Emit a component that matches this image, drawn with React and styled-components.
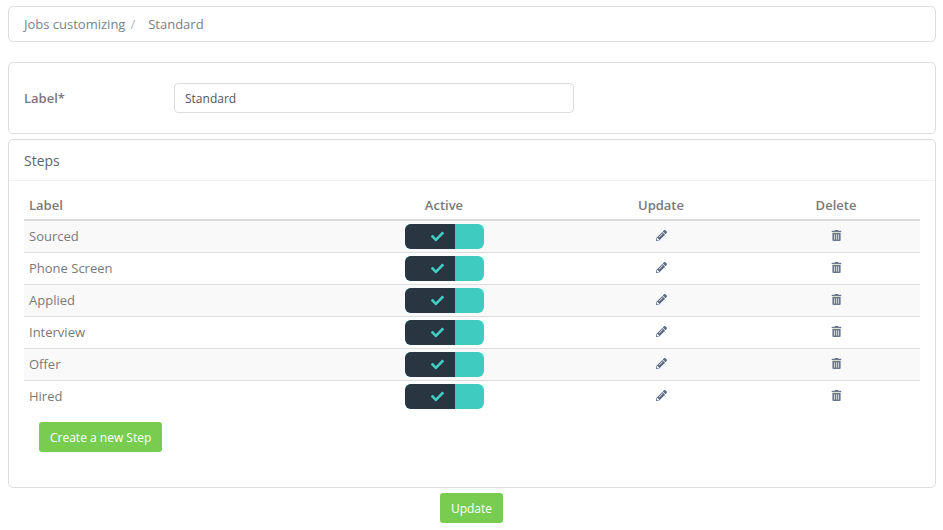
import React from 'react';
import styled, { createGlobalStyle } from 'styled-components';
import { FaCheck, FaPencilAlt, FaTrashAlt } from 'react-icons/fa';

const GlobalStyle = createGlobalStyle`
  html, body {
    margin: 0;
    background: #fff;
    font-family: "Open Sans", "Liberation Sans", sans-serif;
    font-size: 13px;
    color: #797979;
  }
  * {
    box-sizing: border-box;
  }
`;

const Page = styled.div`
  width: 943px;
  height: 530px;
  padding: 6px 7px 0 8px;
  overflow: hidden;
`;

const Panel = styled.div`
  border: 1px solid #dddddd;
  border-radius: 5px;
  background: #fff;
`;

const Breadcrumb = styled(Panel)`
  display: flex;
  align-items: center;
  height: 36px;
  padding: 0 15px;
  margin-bottom: 20px;
  color: #7f8a96;
`;

const Crumb = styled.span`
  color: ${props => (props.current ? '#7d7d7d' : '#76838f')};
`;

const Separator = styled.span`
  color: #b5b5b5;
  padding: 0 13px 0 5px;
`;

const FormPanel = styled(Panel)`
  display: flex;
  align-items: center;
  height: 72px;
  padding: 0 15px;
  margin-bottom: 5px;
`;

const FieldLabel = styled.label`
  width: 150px;
  font-weight: 600;
  color: #797979;
`;

const TextInput = styled.input`
  width: 400px;
  height: 30px;
  padding: 0 10px;
  border: 1px solid #dddddd;
  border-radius: 4px;
  font: inherit;
  font-size: 12px;
  color: #555;
  outline: none;
`;

const StepsPanel = styled(Panel)`
  height: 349px;
`;

const StepsHeading = styled.div`
  height: 41px;
  padding: 0 15px;
  display: flex;
  align-items: center;
  border-bottom: 1px solid #f2f2f2;
  font-size: 14px;
  color: #5a6570;
`;

const StepsBody = styled.div`
  padding: 9px 15px 0;
`;

const Table = styled.table`
  width: 896px;
  table-layout: fixed;
  border-collapse: collapse;
`;

const Head = styled.th`
  height: 30px;
  padding: 0 5px;
  width: ${props => props.width}px;
  text-align: ${props => (props.left ? 'left' : 'center')};
  font-weight: 600;
  color: #797979;
  border-bottom: 2px solid #dddddd;
`;

const Row = styled.tr`
  background: ${props => (props.striped ? '#f9f9f9' : '#fff')};
`;

const Cell = styled.td`
  height: 32px;
  padding: 0 5px;
  text-align: ${props => (props.left ? 'left' : 'center')};
  vertical-align: middle;
  border-bottom: ${props => (props.last ? 'none' : '1px solid #dddddd')};
  color: #797979;
`;

const Toggle = styled.div`
  display: inline-flex;
  vertical-align: middle;
  width: 79px;
  height: 25px;
  border-radius: 6px;
  overflow: hidden;
  background: #40cbc0;
`;

const ToggleOn = styled.div`
  width: 50px;
  height: 100%;
  padding-left: 26px;
  display: flex;
  align-items: center;
  background: #2a3542;
  color: #40cbc0;
  font-size: 13px;
`;

const IconCell = styled.span`
  display: inline-flex;
  color: ${props => props.color};
  font-size: ${props => props.size}px;
`;

const Button = styled.button`
  height: 30px;
  border: none;
  border-radius: 3px;
  background: #78cd51;
  color: #fff;
  font: inherit;
  font-size: 12px;
  padding: 0 11px;
`;

const CreateRow = styled.div`
  padding: 10px 0 0 15px;
`;

const Footer = styled.div`
  display: flex;
  justify-content: center;
  padding: 5px 1px 0 0;
`;

const steps = ['Sourced', 'Phone Screen', 'Applied', 'Interview', 'Offer', 'Hired'];

const App = () => (
  <Page>
    <GlobalStyle />
    <Breadcrumb>
      <Crumb>Jobs customizing</Crumb>
      <Separator>/</Separator>
      <Crumb current>Standard</Crumb>
    </Breadcrumb>
    <FormPanel>
      <FieldLabel>Label*</FieldLabel>
      <TextInput defaultValue="Standard" />
    </FormPanel>
    <StepsPanel>
      <StepsHeading>Steps</StepsHeading>
      <StepsBody>
        <Table>
          <thead>
            <tr>
              <Head left width={294}>Label</Head>
              <Head width={252}>Active</Head>
              <Head width={182}>Update</Head>
              <Head width={168}>Delete</Head>
            </tr>
          </thead>
          <tbody>
            {steps.map((step, index) => (
              <Row key={step} striped={index % 2 === 0}>
                <Cell left last={index === steps.length - 1}>{step}</Cell>
                <Cell last={index === steps.length - 1}>
                  <Toggle>
                    <ToggleOn><FaCheck /></ToggleOn>
                  </Toggle>
                </Cell>
                <Cell last={index === steps.length - 1}>
                  <IconCell color="#5f6f8a" size={11}><FaPencilAlt /></IconCell>
                </Cell>
                <Cell last={index === steps.length - 1}>
                  <IconCell color="#6b7690" size={11}><FaTrashAlt /></IconCell>
                </Cell>
              </Row>
            ))}
          </tbody>
        </Table>
        <CreateRow>
          <Button>Create a new Step</Button>
        </CreateRow>
      </StepsBody>
    </StepsPanel>
    <Footer>
      <Button>Update</Button>
    </Footer>
  </Page>
);

export default App;
